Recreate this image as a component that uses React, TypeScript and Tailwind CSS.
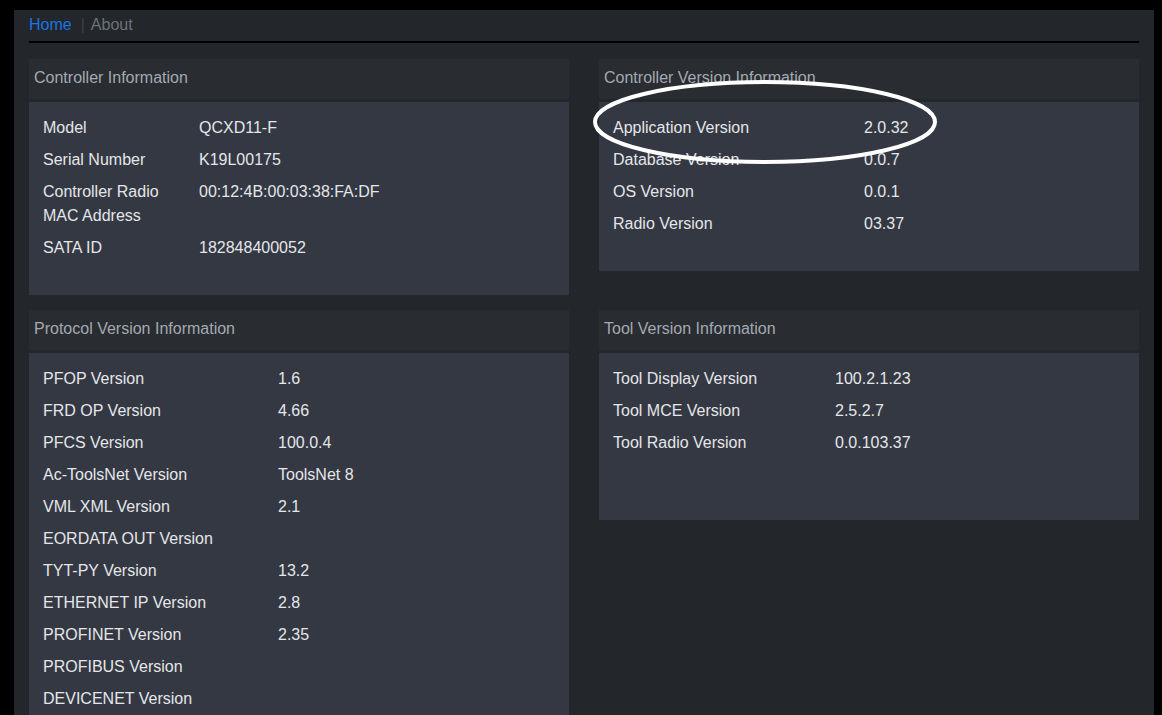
import React from "react";

type Row = { label: React.ReactNode; value?: string };

const InfoCard = ({
  title,
  rows,
  labelWidth,
  bodyClass = "",
}: {
  title: string;
  rows: Row[];
  labelWidth: string;
  bodyClass?: string;
}) => {
  return (
    <div className="flex flex-col gap-[3px]">
      <div className="h-[40px] flex items-center pl-[5px] pb-[2px] bg-[#292c31] text-[#a3aab2]">
        {title}
      </div>
      <div className={`bg-[#343842] pl-[14px] pt-[10px] pb-[31px] text-[#e4e6e9] ${bodyClass}`}>
        {rows.map((row, index) => (
          <div key={index} className="flex py-1 leading-6">
            <div className={labelWidth}>{row.label}</div>
            <div>{row.value}</div>
          </div>
        ))}
      </div>
    </div>
  );
};

export default function App() {
  const controller: Row[] = [
    { label: "Model", value: "QCXD11-F" },
    { label: "Serial Number", value: "K19L00175" },
    {
      label: (
        <>
          Controller Radio
          <br />
          MAC Address
        </>
      ),
      value: "00:12:4B:00:03:38:FA:DF",
    },
    { label: "SATA ID", value: "182848400052" },
  ];

  const controllerVersion: Row[] = [
    { label: "Application Version", value: "2.0.32" },
    { label: "Database Version", value: "0.0.7" },
    { label: "OS Version", value: "0.0.1" },
    { label: "Radio Version", value: "03.37" },
  ];

  const protocol: Row[] = [
    { label: "PFOP Version", value: "1.6" },
    { label: "FRD OP Version", value: "4.66" },
    { label: "PFCS Version", value: "100.0.4" },
    { label: "Ac-ToolsNet Version", value: "ToolsNet 8" },
    { label: "VML XML Version", value: "2.1" },
    { label: "EORDATA OUT Version" },
    { label: "TYT-PY Version", value: "13.2" },
    { label: "ETHERNET IP Version", value: "2.8" },
    { label: "PROFINET Version", value: "2.35" },
    { label: "PROFIBUS Version" },
    { label: "DEVICENET Version" },
  ];

  const tool: Row[] = [
    { label: "Tool Display Version", value: "100.2.1.23" },
    { label: "Tool MCE Version", value: "2.5.2.7" },
    { label: "Tool Radio Version", value: "0.0.103.37" },
  ];

  return (
    <div className="min-h-screen bg-black pt-[10px] pl-[14px] pr-[8px] font-['Liberation_Sans',Arial,sans-serif] text-base">
      <div className="relative bg-[#23262b] px-[15px] min-h-[705px]">
        <nav className="flex h-[33px] pt-[3px] leading-6 border-b-2 border-black">
          <span className="text-[#1b74e4]">Home</span>
          <span className="text-[#3d4147] ml-[9px] mr-[6px]">|</span>
          <span className="text-[#6c737b]">About</span>
        </nav>

        <div className="grid grid-cols-2 gap-x-[30px] gap-y-[15px] pt-[16px]">
          <div>
            <InfoCard title="Controller Information" rows={controller} labelWidth="w-[156px]" />
          </div>
          <div>
            <InfoCard
              title="Controller Version Information"
              rows={controllerVersion}
              labelWidth="w-[251px]"
            />
          </div>
          <div>
            <InfoCard title="Protocol Version Information" rows={protocol} labelWidth="w-[235px]" />
          </div>
          <div>
            <InfoCard
              title="Tool Version Information"
              rows={tool}
              labelWidth="w-[222px]"
              bodyClass="min-h-[167px]"
            />
          </div>
        </div>

        <svg
          className="absolute left-[578px] top-[68px] pointer-events-none"
          width="346"
          height="88"
          viewBox="0 0 346 88"
        >
          <ellipse cx="173" cy="44" rx="170" ry="40" fill="none" stroke="white" strokeWidth="4" />
        </svg>
      </div>
    </div>
  );
}
